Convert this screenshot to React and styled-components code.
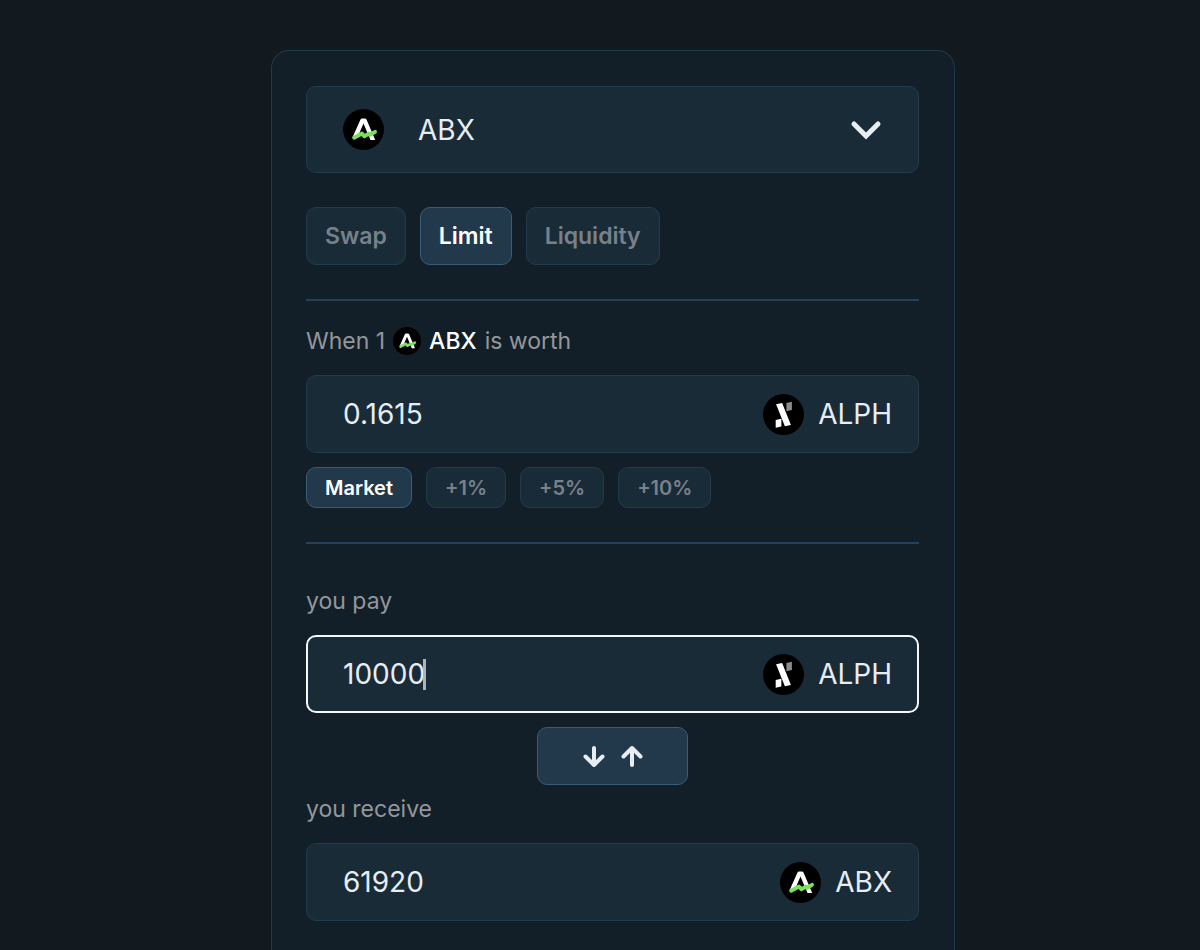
import React, { useState } from 'react'
import styled, { createGlobalStyle, css, keyframes } from 'styled-components'

const GlobalStyle = createGlobalStyle`
    * {
        box-sizing: border-box;
    }

    body {
        margin: 0;
        background: #12191f;
        color: #e6edf3;
        font-family: Inter, "Liberation Sans", sans-serif;
    }

    button, input, select {
        font-family: inherit;
    }
`

const Page = styled.main`
    min-height: 100vh;
    padding: 50px 0px 0px 26px;
    display: flex;
    justify-content: center;
`

const Card = styled.form`
    width: 100%;
    max-width: 684px;
    padding: 35px 35px 28px 34px;
    display: flex;
    flex-direction: column;
    background: #131f28;
    border: 1px solid #213a4a;
    border-bottom: none;
    border-radius: 18px 18px 0px 0px;
`

const box = css`
    background: #1a2b38;
    border: 1px solid #243b4b;
    border-radius: 10px;
`

const TokenPicker = styled.label`
    ${box}
    height: 87px;
    padding: 0px 36px 0px 36px;
    display: flex;
    align-items: center;
    gap: 34px;
`

const TokenSelect = styled.select`
    flex: 1;
    min-width: 0;
    height: 100%;
    padding: 0px;
    appearance: none;
    border: none;
    outline: none;
    background: transparent;
    color: #e6edf3;
    font-size: 28px;
    cursor: pointer;
`

const ButtonRow = styled.div`
    display: flex;
    flex-wrap: wrap;
    gap: 14px;
    margin-top: ${props => props.$top};
`

const Button = styled.button`
    ${box}
    height: 58px;
    padding: 0px 18px;
    color: #78818a;
    font-size: 23px;
    font-weight: 600;
    cursor: pointer;

    ${props => props.$small && css`
        height: 41px;
        font-size: 20px;
    `}

    ${props => props.$active && css`
        background: #22394c;
        border-color: #3c5c74;
        color: #ffffff;
    `}
`

const FlipButton = styled(Button)`
    width: 151px;
    margin: 14px 0px 8px 0px;
    align-self: center;
    display: flex;
    align-items: center;
    justify-content: center;
    gap: 14px;
    color: #e6edf3;
`

const Divider = styled.hr`
    width: 100%;
    height: 2px;
    margin: 34px 0px 0px 0px;
    border: none;
    background: #264258;
`

const Label = styled.label`
    display: flex;
    align-items: center;
    gap: 8px;
    height: 32px;
    margin: ${props => props.$top} 0px 18px 0px;
    color: #93979b;
    font-size: 23px;

    strong {
        color: #ffffff;
        font-weight: 500;
    }
`

const Field = styled.div`
    ${box}
    height: 78px;
    padding: 0px 26px 0px 36px;
    display: flex;
    align-items: center;
    justify-content: space-between;
    gap: 16px;

    ${props => props.$focused && css`
        border: 2px solid #f4f8fa;
        padding: 0px 25px 0px 35px;
    `}
`

const Value = styled.div`
    display: flex;
    align-items: center;
    min-width: 0;
`

const Input = styled.input`
    field-sizing: content;
    min-width: 12px;
    max-width: 100%;
    height: 48px;
    padding: 0px;
    border: none;
    outline: none;
    background: transparent;
    color: #e6edf3;
    caret-color: transparent;
    font-size: 28px;
`

const blink = keyframes`
    0%, 80% { opacity: 1; }
    81%, 100% { opacity: 0; }
`

const Caret = styled.span`
    width: 3px;
    height: 31px;
    margin-left: -2px;
    background: #a9b4bc;
    animation: ${blink} 5s infinite;
`

const Token = styled.span`
    display: flex;
    align-items: center;
    gap: 14px;
    font-size: 28px;
`

function AbxLogo({ size = 41 }) {
    return (
        <svg width={size} height={size} viewBox="0 0 42 42" aria-hidden="true">
            <circle cx="21" cy="21" r="21" fill="#000000" />
            <path d="M9.8 29L17.8 11Q18.4 9.8 19.6 9.8H22.4Q23.6 9.8 24.2 11L33 31.8H28.2L21 14.8L15 28.6Z" fill="#ffffff" />
            <path d="M11.4 29.4L19.4 25.2L21.8 28L26.4 25.2L27.6 26.4L32.8 23.4" fill="none" stroke="#7be05c" strokeWidth="4" strokeLinecap="round" strokeLinejoin="round" />
        </svg>
    )
}

function AlphLogo({ size = 41 }) {
    return (
        <svg width={size} height={size} viewBox="0 0 42 42" aria-hidden="true">
            <circle cx="21" cy="21" r="21" fill="#000000" />
            <path d="M13.4 10.4L19.6 9.2L28.6 31.8L22.4 33Z" fill="#ffffff" />
            <path d="M13 26.6L18.8 25.4V33.4L13 34.6Z" fill="#ffffff" />
            <path d="M24 9.2L29.6 8V16.4L24 17.6Z" fill="#8b8b8b" />
        </svg>
    )
}

function Chevron() {
    return (
        <svg width="32" height="22" viewBox="0 0 32 22" aria-hidden="true">
            <path d="M4 5L16 17L28 5" fill="none" stroke="#e6edf3" strokeWidth="5" strokeLinecap="round" />
        </svg>
    )
}

function Arrow({ up }) {
    return (
        <svg width="24" height="24" viewBox="0 0 24 24" fill="none" stroke="currentColor" strokeWidth="4" strokeLinecap="round" strokeLinejoin="round" aria-hidden="true">
            <path d={up ? 'M12 21V4M3.5 12.5L12 4L20.5 12.5' : 'M12 4V21M3.5 12.5L12 21L20.5 12.5'} />
        </svg>
    )
}

const tabs = ['Swap', 'Limit', 'Liquidity']
const offsets = ['Market', '+1%', '+5%', '+10%']

function AmountField({ id, value, onChange, token, focused }) {
    return (
        <Field $focused={focused}>
            <Value>
                <Input id={id} inputMode={'decimal'} value={value} onChange={e => onChange(e.target.value)} />
                {focused && <Caret />}
            </Value>
            <Token>
                {token === 'ABX' ? <AbxLogo /> : <AlphLogo />}
                {token}
            </Token>
        </Field>
    )
}

export default function App() {
    const [tab, setTab] = useState('Limit')
    const [offset, setOffset] = useState('Market')
    const [price, setPrice] = useState('0.1615')
    const [pay, setPay] = useState('10000')
    const [receive, setReceive] = useState('61920')

    return (
        <Page>
            <GlobalStyle />
            <Card onSubmit={e => e.preventDefault()}>
                <TokenPicker>
                    <AbxLogo />
                    <TokenSelect aria-label={'Token'}>
                        <option>ABX</option>
                    </TokenSelect>
                    <Chevron />
                </TokenPicker>

                <ButtonRow $top={'34px'}>
                    {tabs.map(name => (
                        <Button key={name} type={'button'} $active={name === tab} onClick={() => setTab(name)}>
                            {name}
                        </Button>
                    ))}
                </ButtonRow>

                <Divider />

                <Label htmlFor={'price'} $top={'24px'}>
                    When 1 <AbxLogo size={28} /> <strong>ABX</strong> is worth
                </Label>
                <AmountField id={'price'} value={price} onChange={setPrice} token={'ALPH'} />

                <ButtonRow $top={'14px'}>
                    {offsets.map(name => (
                        <Button key={name} type={'button'} $small $active={name === offset} onClick={() => setOffset(name)}>
                            {name}
                        </Button>
                    ))}
                </ButtonRow>

                <Divider />

                <Label htmlFor={'pay'} $top={'41px'}>you pay</Label>
                <AmountField id={'pay'} value={pay} onChange={setPay} token={'ALPH'} focused />

                <FlipButton type={'button'} $active aria-label={'Switch direction'}>
                    <Arrow />
                    <Arrow up />
                </FlipButton>

                <Label htmlFor={'receive'} $top={'0px'}>you receive</Label>
                <AmountField id={'receive'} value={receive} onChange={setReceive} token={'ABX'} />
            </Card>
        </Page>
    )
}
